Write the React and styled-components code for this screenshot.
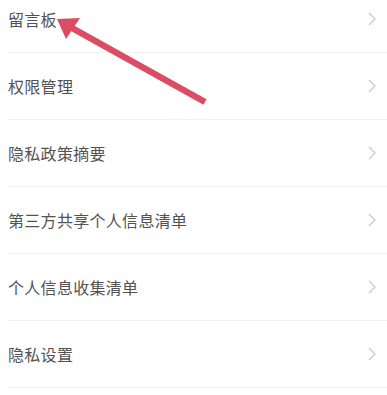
import React from 'react';
import styled, { createGlobalStyle } from 'styled-components';

const GlobalStyle = createGlobalStyle`
  html, body {
    margin: 0;
    padding: 0;
    background: #ffffff;
  }
  body {
    font-family: "Noto Sans CJK SC", "Noto Sans", sans-serif;
  }
`;

const Page = styled.div`
  position: relative;
  width: 387px;
  height: 395px;
  overflow: hidden;
  background: #fff;
`;

const List = styled.ul`
  list-style: none;
  margin: -14px 0 0 0;
  padding: 0 0 0 8px;
`;

const Row = styled.li`
  display: flex;
  align-items: center;
  justify-content: space-between;
  height: 66px;
  padding-right: 11px;
  border-bottom: 1px solid #f1f1f1;
`;

const Label = styled.span`
  font-size: 16px;
  color: #525252;
  letter-spacing: 0.3px;
`;

const Chevron = styled.svg`
  width: 8px;
  height: 14px;
  flex-shrink: 0;
`;

const Overlay = styled.svg`
  position: absolute;
  left: 0;
  top: 0;
  pointer-events: none;
`;

const items = [
  '留言板',
  '权限管理',
  '隐私政策摘要',
  '第三方共享个人信息清单',
  '个人信息收集清单',
  '隐私设置',
];

function App() {
  return (
    <>
      <GlobalStyle />
      <Page>
        <List>
          {items.map((t) => (
            <Row key={t}>
              <Label>{t}</Label>
              <Chevron viewBox="0 0 8 14">
                <path d="M1 1 L7 7 L1 13" fill="none" stroke="#c8c8c8" strokeWidth="1.2" />
              </Chevron>
            </Row>
          ))}
        </List>
        <Overlay width="387" height="395" viewBox="0 0 387 395">
          <line x1="205" y1="102" x2="72" y2="28" stroke="#da4d65" strokeWidth="6.5" strokeLinecap="butt" />
          <polygon points="57,19 80,18 66,39" fill="#da4d65" />
        </Overlay>
      </Page>
    </>
  );
}

export default App;
